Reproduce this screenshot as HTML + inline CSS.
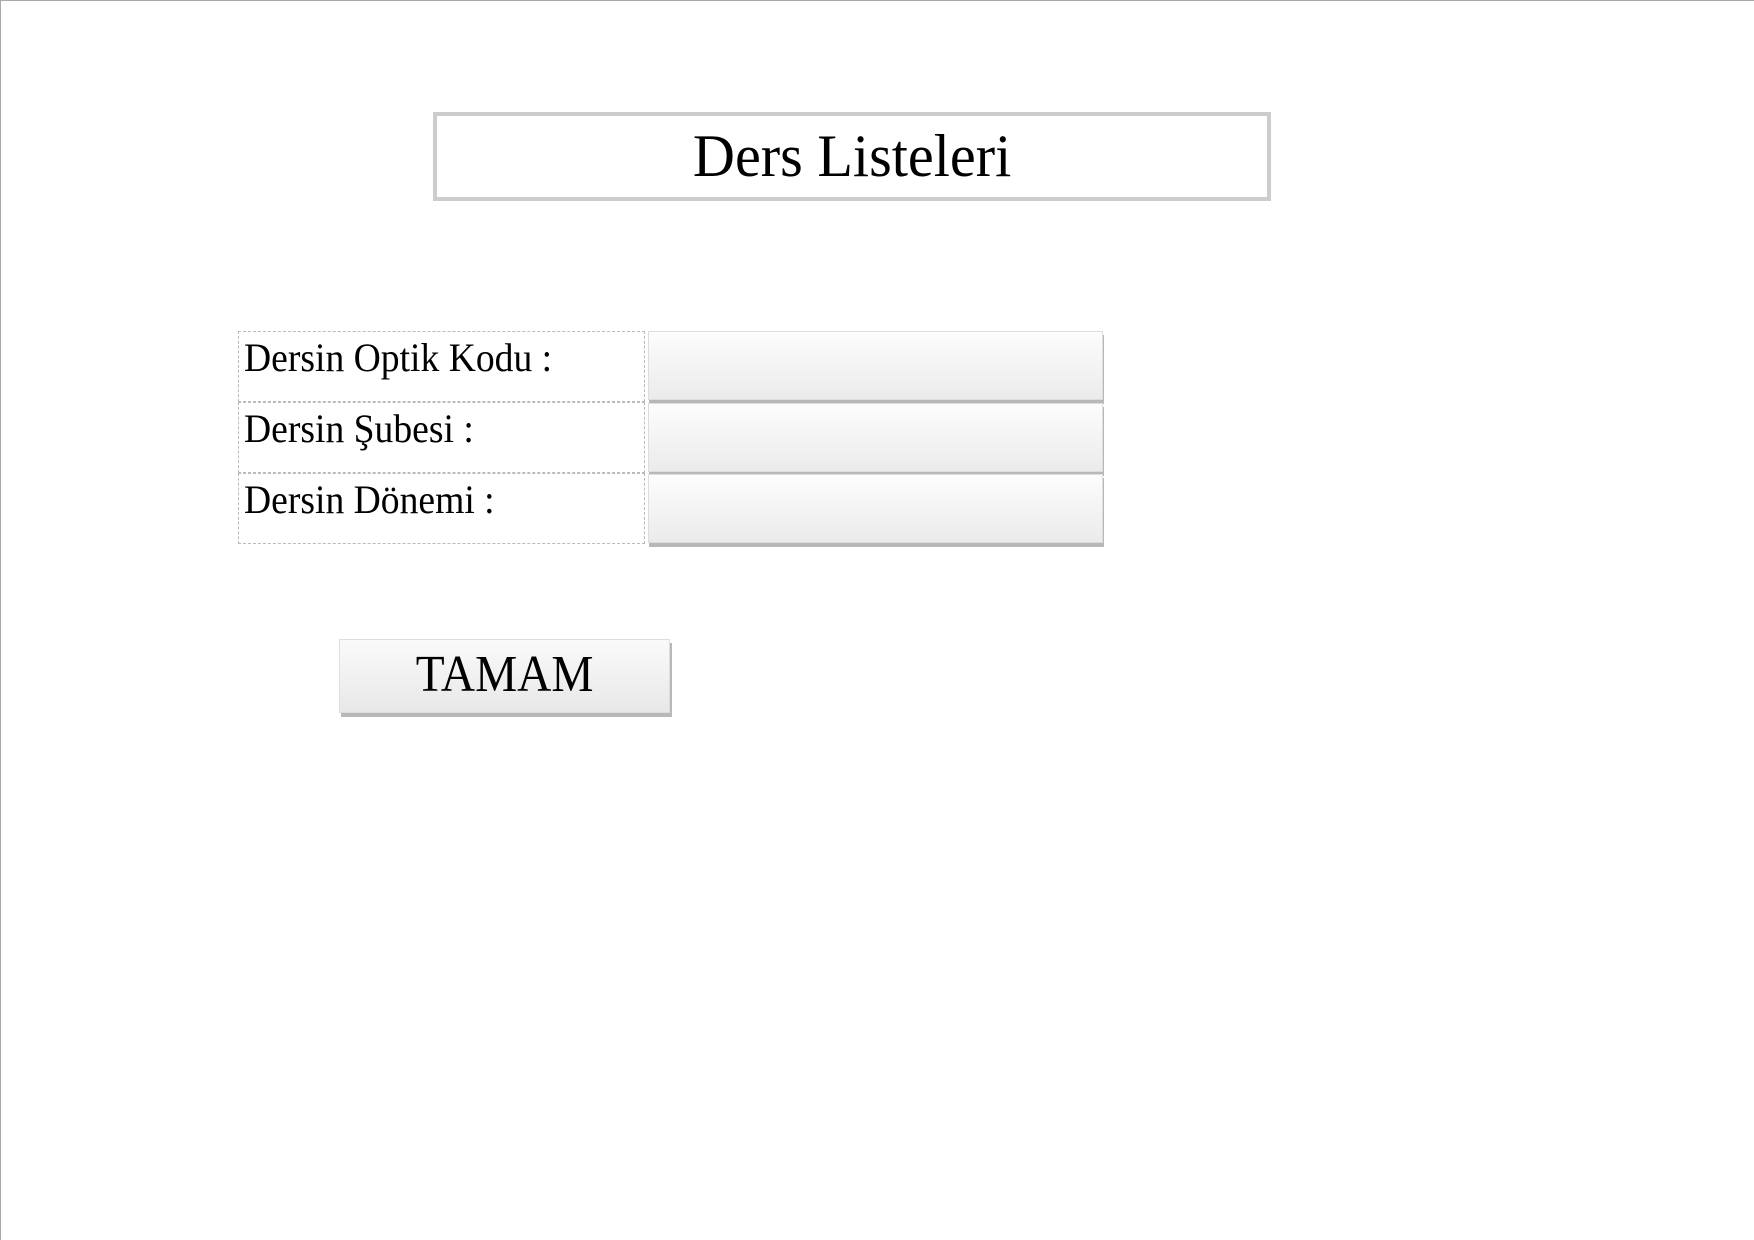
<!DOCTYPE html>
<html><head><meta charset="utf-8"><style>
html,body{margin:0;padding:0}
body{width:1754px;height:1240px;position:relative;background:#fff;overflow:hidden;font-family:"Liberation Serif",serif;color:#000}
.pb{position:absolute;left:0;top:0;width:1754px;height:1240px;border-top:1px solid #aaa;border-left:1px solid #aaa;box-sizing:border-box}
.title{position:absolute;left:433px;top:112px;width:838px;height:89px;border:4px solid #ccc;box-sizing:border-box;text-align:center;line-height:80px;font-size:60px}
.title span,.lab span,.btn span{display:inline-block}
.title span{transform:scaleX(.97)}
.lab{position:absolute;left:238px;width:407px;height:71px;border:1px dashed #bbb;box-sizing:border-box;font-size:40px;line-height:52px;padding-left:5px}
.lab span{transform-origin:left center;transform:scaleX(.94)}
.inp{position:absolute;left:648px;width:455px;height:69px;box-sizing:border-box;border:1px solid #ddd;background:linear-gradient(#fdfdfd,#ebebeb);box-shadow:1px 4px 0 #b8b8b8}
.btn{position:absolute;left:339px;top:639px;width:331px;height:74px;box-sizing:border-box;border:1px solid #ddd;background:linear-gradient(#fafafa,#e8e8e8);box-shadow:2px 4px 0 #b8b8b8;text-align:center;font-size:52px;line-height:70px}
.btn span{transform:scaleX(.91)}
</style></head><body>
<div class="pb"></div>
<div class="title"><span>Ders Listeleri</span></div>
<div class="lab" style="top:331px"><span>Dersin Optik Kodu :</span></div>
<div class="lab" style="top:402px"><span>Dersin Şubesi :</span></div>
<div class="lab" style="top:473px"><span>Dersin Dönemi :</span></div>
<div class="inp" style="top:331px"></div>
<div class="inp" style="top:403px"></div>
<div class="inp" style="top:474px"></div>
<div class="btn"><span>TAMAM</span></div>
</body></html>
